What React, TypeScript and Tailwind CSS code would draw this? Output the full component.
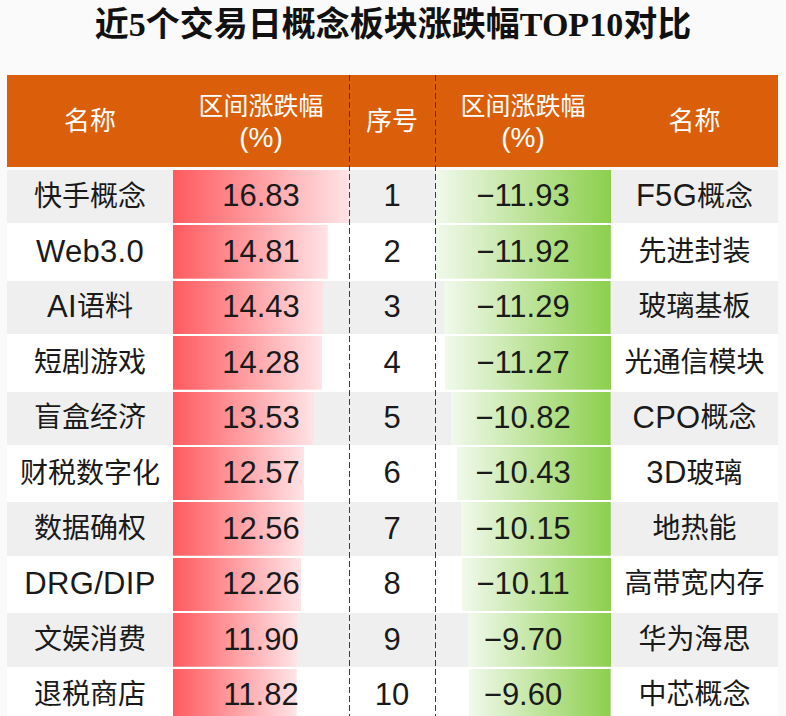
import React from 'react';

interface Pair {
  upName: string;
  up: number;
  down: number;
  downName: string;
}

const rows: Pair[] = [
  { upName: '快手概念', up: 16.83, down: -11.93, downName: 'F5G概念' },
  { upName: 'Web3.0', up: 14.81, down: -11.92, downName: '先进封装' },
  { upName: 'AI语料', up: 14.43, down: -11.29, downName: '玻璃基板' },
  { upName: '短剧游戏', up: 14.28, down: -11.27, downName: '光通信模块' },
  { upName: '盲盒经济', up: 13.53, down: -10.82, downName: 'CPO概念' },
  { upName: '财税数字化', up: 12.57, down: -10.43, downName: '3D玻璃' },
  { upName: '数据确权', up: 12.56, down: -10.15, downName: '地热能' },
  { upName: 'DRG/DIP', up: 12.26, down: -10.11, downName: '高带宽内存' },
  { upName: '文娱消费', up: 11.9, down: -9.7, downName: '华为海思' },
  { upName: '退税商店', up: 11.82, down: -9.6, downName: '中芯概念' },
];

const MAX_UP = 16.83;
const MAX_DOWN = 11.93;
const BAR_W = 176;

const cols = 'grid grid-cols-[166px_176px_86px_176px_167px]';

// latin runs are set a bit larger than the CJK ones, like the source chart
const Mixed: React.FC<{ text: string }> = ({ text }) => {
  const parts = text.match(/[\u4e00-\u9fff]+|[^\u4e00-\u9fff]+/g) ?? [];
  return (
    <>
      {parts.map((p, i) =>
        /[\u4e00-\u9fff]/.test(p) ? (
          <span key={i} className="text-[28px]">{p}</span>
        ) : (
          <span key={i} className="text-[31px] tracking-[0.01em]">{p}</span>
        ),
      )}
    </>
  );
};

const App: React.FC = () => {
  return (
    <div
      className="min-h-[716px] w-[786px] overflow-hidden bg-[#fafafa] text-[#1a1a1a]"
      style={{ fontFamily: '"Liberation Sans", "Noto Sans CJK SC", sans-serif' }}
    >
      <h1
        className="h-[75px] pb-[25px] text-center text-[34px] font-bold leading-[50px] text-[#111]"
        style={{ fontFamily: '"Liberation Serif", "Noto Sans CJK SC", serif' }}
      >
        近5个交易日概念板块涨跌幅TOP10对比
      </h1>

      <div className="relative mx-[7px] w-[771px]">
        {/* header */}
        <div className={`${cols} h-[92px] bg-[#db5f0b] text-[25px] leading-[32px] text-white`}>
          <div className="flex items-center justify-center text-[26px]">名称</div>
          <div className="flex flex-col items-center justify-center pt-[2px]">
            <span>区间涨跌幅</span>
            <span className="text-[28px]">(%)</span>
          </div>
          <div className="flex items-center justify-center text-[26px]">序号</div>
          <div className="flex flex-col items-center justify-center pt-[2px]">
            <span>区间涨跌幅</span>
            <span className="text-[28px]">(%)</span>
          </div>
          <div className="flex items-center justify-center text-[26px]">名称</div>
        </div>

        {/* body */}
        <div className="mt-[3px] flex flex-col gap-[2px] bg-white text-[31px]">
          {rows.map((r, i) => (
            <div
              key={r.upName}
              className={`${cols} h-[53.4px] ${i % 2 === 0 ? 'bg-[#efefef]' : 'bg-white'}`}
            >
              <div className="flex items-center justify-center whitespace-nowrap">
                <Mixed text={r.upName} />
              </div>
              <div
                className="flex items-center justify-center bg-[linear-gradient(to_right,#ff5a5f,#ffe4e7)] bg-left bg-no-repeat"
                style={{ backgroundSize: `${(r.up / MAX_UP) * BAR_W}px 100%` }}
              >
                {r.up.toFixed(2)}
              </div>
              <div className="flex items-center justify-center">{i + 1}</div>
              <div
                className="flex items-center justify-center bg-[linear-gradient(to_right,#f1f9ec,#8ccf4d)] bg-right bg-no-repeat"
                style={{ backgroundSize: `${(Math.abs(r.down) / MAX_DOWN) * BAR_W}px 100%` }}
              >
                −{Math.abs(r.down).toFixed(2)}
              </div>
              <div className="flex items-center justify-center whitespace-nowrap">
                <Mixed text={r.downName} />
              </div>
            </div>
          ))}
        </div>

        {/* dashed dividers around the rank column */}
        <div className="pointer-events-none absolute bottom-0 left-[342px] top-0 w-px bg-[repeating-linear-gradient(to_bottom,#3c3c3c_0px,#3c3c3c_6px,transparent_6px,transparent_9px)]" />
        <div className="pointer-events-none absolute bottom-0 left-[428px] top-0 w-px bg-[repeating-linear-gradient(to_bottom,#3c3c3c_0px,#3c3c3c_6px,transparent_6px,transparent_9px)]" />
      </div>
    </div>
  );
};

export default App;
